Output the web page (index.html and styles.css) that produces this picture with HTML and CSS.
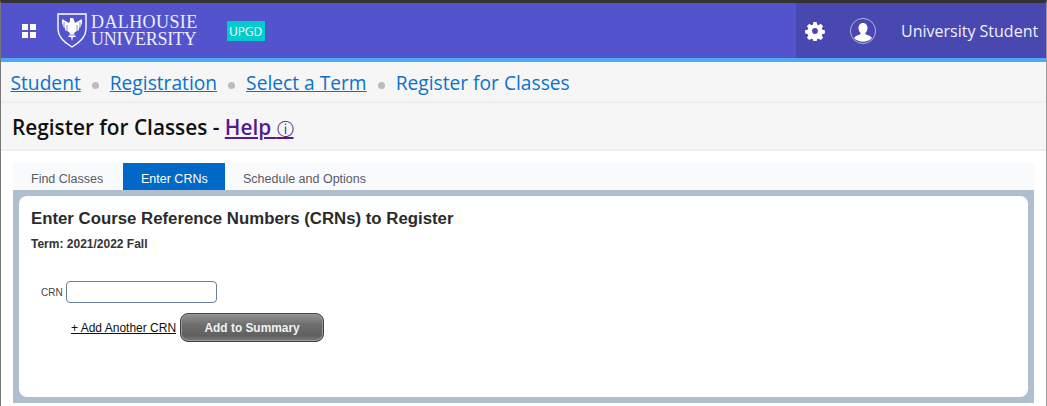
FILE: index.html
```html
<!DOCTYPE html>
<html lang="en">
<head>
  <meta charset="UTF-8">
  <title>Register for Classes</title>
  <link rel="stylesheet" href="styles.css">
</head>
<body>
  <div class="window">
    <header class="topbar">
      <div class="brand">
        <svg class="apps-icon" width="14" height="14" viewBox="0 0 14 14">
          <path fill="#fff" d="M0 0h6v6H0zM8 0h6v6H8zM0 8h6v6H0zM8 8h6v6H8z"/>
        </svg>
        <svg class="crest" width="30" height="35" viewBox="0 0 30 35">
          <path fill="none" stroke="#fff" stroke-width="1.400" d="M1 1h28v15c0 9-7 14-14 18C8 30 1 25 1 16z"/>
          <path fill="#fff" d="M13 5h3l1 2 1 3 7-4v5l-1 1v2l-2 1v2l-2 1-2 1-1 2 2 3h-3l-1 4-1-4h-3l2-3-1-2-2-1-2-1v-2l-2-1v-2l-1-1V6l7 4 1-2z"/>
          <path fill="none" stroke="#5353cd" stroke-width=".7" d="M7 9v7M10 12v6M23 9v7M20 12v6M12 22h6"/>
        </svg>
        <div class="wordmark"><span class="line-top">DALHOUSIE</span><span class="line-bottom">UNIVERSITY</span></div>
        <span class="env-badge">UPGD</span>
      </div>
      <div class="user-area">
        <svg class="gear" width="20" height="20" viewBox="0 0 20 20">
          <path fill="#fff" fill-rule="evenodd" d="M8.200 0h3.600l.5 2.800 1.700.7L16.400 2 19 4.600l-1.500 2.400.7 1.700 2.800.5v3.600l-2.800.5-.7 1.700 1.500 2.400-2.600 2.600-2.400-1.500-1.700.7-.5 2.700H8.200l-.5-2.700-1.700-.7L3.600 20 1 17.400l1.500-2.400-.7-1.700L-1 12.800V9.200l2.800-.5.700-1.700L1 4.600 3.600 2l2.400 1.500 1.700-.7zM10 6.800a3.200 3.200 0 1 0 0 6.400 3.200 3.200 0 0 0 0-6.400z" transform="translate(1 1) scale(.9)"/>
        </svg>
        <svg class="avatar" width="28" height="28" viewBox="0 0 28 28">
          <circle cx="14" cy="14" r="12.600" fill="none" stroke="#c9c9ee" stroke-width=".8"/>
          <path fill="#fff" d="M14 6c2.800 0 4.500 2.200 4.500 5 0 2-.8 3.800-2 4.800v1.400c2.500.9 5.500 1.700 6.500 3.800a12.600 12.600 0 0 1-18 0c1-2.100 4-2.900 6.500-3.800v-1.400c-1.200-1-2-2.800-2-4.800 0-2.800 1.700-5 4.500-5z"/>
        </svg>
        <span class="user-name">University Student</span>
      </div>
    </header>

    <nav class="breadcrumb">
      <a href="#">Student</a><span class="dot"></span>
      <a href="#">Registration</a><span class="dot"></span>
      <a href="#">Select a Term</a><span class="dot"></span>
      <span class="current">Register for Classes</span>
    </nav>

    <div class="page-title">
      <h1>Register for Classes - <a href="#">Help <span class="info">ⓘ</span></a></h1>
    </div>

    <main class="content">
      <ul class="tabs">
        <li class="tab-find">Find Classes</li>
        <li class="active">Enter CRNs</li>
        <li>Schedule and Options</li>
      </ul>
      <section class="panel">
        <div class="panel-inner">
          <h2>Enter Course Reference Numbers (CRNs) to Register</h2>
          <div class="term">Term: 2021/2022 Fall</div>
          <div class="crn-row">
            <label for="crn">CRN</label>
            <input id="crn" type="text">
          </div>
          <div class="actions">
            <a class="add-crn" href="#">+ Add Another CRN</a>
            <button type="button" class="add-btn">Add to Summary</button>
          </div>
        </div>
      </section>
    </main>
  </div>
</body>
</html>
```

FILE: styles.css
```css
* { box-sizing: border-box; }
html, body { margin: 0; height: 100%; overflow: hidden; background: #fff; }
.window { height: 406px; border-top: 3px solid #333; border-left: 1px solid #777; border-right: 1px solid #999; font-family: "Open Sans", sans-serif; }

.topbar { display: flex; justify-content: space-between; height: 59px; background: #5353cd; border-bottom: 4px solid #4fa8f5; }
.brand { display: flex; align-items: center; }
.apps-icon { margin-left: 21px; margin-top: 1px; }
.crest { margin-left: 21px; }
.wordmark { margin-left: 4px; font-family: "Liberation Serif", serif; font-size: 18px; line-height: 17px; color: #eeeefa; }
.wordmark span { display: block; white-space: nowrap; }
.line-top { letter-spacing: .4px; }
.line-bottom { letter-spacing: -.25px; }
.env-badge { width: 38px; margin-left: 29px; height: 20px; line-height: 21px; font-size: 12px; text-align: center; color: #fff; background: #00cccc; }
.user-area { display: flex; align-items: center; width: 250px; background: #4848b0; }
.gear { margin-left: 9px; }
.avatar { margin-left: 24px; }
.user-name { margin-left: 24px; font-size: 16px; color: #f0f0ff; white-space: nowrap; }

.breadcrumb { display: flex; align-items: center; height: 41px; padding: 2px 0 0 9.5px; background: #f6f6f6; border-bottom: 2px solid #eee; font-size: 19.2px; }
.breadcrumb a { color: #0a72cc; }
.breadcrumb .current { color: #0a72cc; }
.dot { width: 7px; height: 7px; margin: 5px 11px 0; border-radius: 50%; background: #bbb; }

.page-title { height: 48px; padding-left: 11px; background: #f6f6f6; border-bottom: 2px solid #eee; }
.page-title h1 { margin: 0; font-size: 20.8px; line-height: 49px; font-weight: 600; color: #111; }
.page-title a { color: #551a8b; }
.info { font-family: "DejaVu Sans", sans-serif; font-size: 17px; font-weight: normal; }

.content { padding: 12px 12px 0; }
.tabs { display: flex; height: 27px; margin: 0; padding: 0; list-style: none; background: #f9fafc; font-family: "Liberation Sans", sans-serif; font-size: 12.5px; }
.tabs li { padding: 0 18px; line-height: 32px; color: #5a5a66; white-space: nowrap; }
.tabs .tab-find { width: 110px; }
.tabs .active { width: 102px; background: #0069c8; color: #fff; }

.panel { height: 213px; padding: 6px; background: #b0bfce; }
.panel-inner { height: 201px; padding: 13px 12px 0; background: #fff; border-radius: 8px; font-family: "Liberation Sans", sans-serif; }
.panel-inner h2 { margin: 0; font-size: 16.8px; line-height: 20px; font-weight: bold; color: #2b2b2b; }
.term { margin-top: 8px; font-size: 12px; line-height: 14px; font-weight: bold; color: #333; }
.crn-row { display: flex; align-items: center; margin-top: 30px; padding-left: 10px; }
.crn-row label { font-size: 10px; color: #444; }
.crn-row input { width: 151px; height: 22px; margin-left: 3px; border: 1px solid #6a8099; border-radius: 4px; }
.actions { display: flex; align-items: center; margin-top: 10px; padding-left: 40px; }
.add-crn { font-size: 12px; color: #111; }
.add-btn { width: 144px; height: 29px; margin-left: 4px; border: 1px solid #444; border-radius: 8px; background: linear-gradient(#929292, #6e6e6e 40%, #606060 80%, #7c7c7c); box-shadow: inset 0 0 0 1px #999; color: #f2f2f2; font-family: "Liberation Sans", sans-serif; font-size: 11.9px; font-weight: bold; }
```
